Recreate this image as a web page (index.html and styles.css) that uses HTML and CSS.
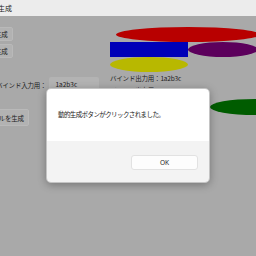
FILE: index.html
```html
<!DOCTYPE html>
<html lang="ja">
<head>
  <meta charset="UTF-8">
  <title>図形を生成</title>
  <link rel="stylesheet" href="styles.css">
</head>
<body>
<div class="titlebar">
  <span class="title">図形を生成</span>
</div>
<div class="window">
  <div class="left-pane">
    <button class="btn">図形を生成</button>
    <button class="btn btn-second">図形を生成</button>
    <div class="bind-row">
      <span class="bind-label">バインド入力用：</span>
      <div class="textbox">1a2b3c</div>
    </div>
    <button class="btn btn-label">ラベルを生成</button>
  </div>
  <div class="right-pane">
    <div class="shape-row">
      <div class="shape ellipse red"></div>
    </div>
    <div class="shape-row">
      <div class="shape blue"></div>
      <div class="shape ellipse purple"></div>
    </div>
    <div class="shape-row">
      <div class="shape ellipse yellow"></div>
    </div>
    <div class="output">バインド出力用：1a2b3c</div>
    <div class="output">バインド出力用：</div>
    <div class="shape ellipse green"></div>
  </div>
</div>

<div class="dialog">
  <div class="dialog-body">動的生成ボタンがクリックされました。</div>
  <div class="dialog-footer">
    <button class="ok">OK</button>
  </div>
</div>
</body>
</html>
```

FILE: styles.css
```css
* {
  margin: 0;
  padding: 0;
  box-sizing: border-box;
}

body {
  font-family: "Noto Sans CJK JP", "Noto Sans", sans-serif;
  font-size: 6.5px;
  background: #a9a9a9;
  color: #1c1c1c;
  width: 256px;
  height: 256px;
  overflow: hidden;
}

.titlebar {
  height: 16px;
  background: #ececec;
  display: flex;
  align-items: center;
  margin-left: -23px;
}

.title {
  font-size: 7px;
  color: #222;
}

.window {
  display: flex;
  margin-left: -40px;
  padding-top: 11px;
}

.left-pane {
  width: 150px;
  flex-shrink: 0;
  display: flex;
  flex-direction: column;
  align-items: flex-start;
  padding-left: 10px;
}

.btn {
  font-family: inherit;
  font-size: 6.5px;
  letter-spacing: -0.2px;
  color: #1c1c1c;
  background: #b2b2b2;
  border: 1px solid #b9b9b9;
  border-radius: 2px;
  height: 14px;
  padding: 0 4px 0 5px;
  line-height: 12px;
}

.btn-second {
  margin-top: 3px;
}

.bind-row {
  display: flex;
  align-items: center;
  margin-top: 19px;
  margin-left: 26px;
}

.bind-label {
  letter-spacing: -0.2px;
}

.textbox {
  margin-left: 3px;
  width: 50px;
  height: 15px;
  background: #b3b3b3;
  border-radius: 2px;
  padding-left: 6px;
  line-height: 15px;
}

.btn-label {
  margin-top: 17px;
  height: 17px;
  padding: 0 4px 0 15px;
}

.right-pane {
  display: flex;
  flex-direction: column;
  align-items: flex-start;
}

.shape-row {
  display: flex;
}

.shape {
  height: 15px;
  flex-shrink: 0;
}

.ellipse {
  border-radius: 50%;
}

.red {
  width: 144px;
  margin-left: 6px;
  background: #b80000;
}

.blue {
  width: 78px;
  background: #0000b8;
}

.purple {
  width: 70px;
  background: #5c005c;
}

.yellow {
  width: 78px;
  background: #b8b800;
}

.output {
  line-height: 12px;
  letter-spacing: -0.2px;
}

.green {
  width: 90px;
  height: 16px;
  margin-top: 3px;
  margin-left: 100px;
  background: #005c00;
}

.dialog {
  position: fixed;
  left: 46px;
  top: 88px;
  width: 164px;
  height: 95px;
  border: 1px solid #c4c4c4;
  border-radius: 5px;
  overflow: hidden;
  box-shadow: 0 2px 8px rgba(0, 0, 0, 0.3);
  display: flex;
  flex-direction: column;
}

.dialog-body {
  background: #fff;
  height: 52px;
  padding: 19px 0 0 11px;
  line-height: 12px;
  letter-spacing: -0.6px;
  color: #1a1a1a;
}

.dialog-footer {
  flex: 1;
  background: #f3f3f3;
  display: flex;
  justify-content: flex-end;
  align-items: flex-start;
  padding: 14px 11px 0 0;
}

.ok {
  font-family: "Noto Sans", sans-serif;
  font-size: 6.5px;
  width: 67px;
  height: 15px;
  background: #fdfdfd;
  border: 1px solid #e2e2e2;
  border-radius: 3px;
  color: #1a1a1a;
}
```
